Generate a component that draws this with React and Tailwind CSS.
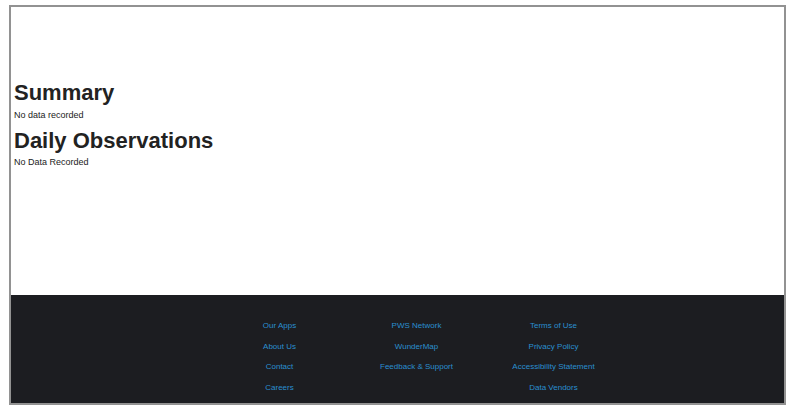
import React from 'react';

const columns = [
  ['Our Apps', 'About Us', 'Contact', 'Careers'],
  ['PWS Network', 'WunderMap', 'Feedback & Support'],
  ['Terms of Use', 'Privacy Policy', 'Accessibility Statement', 'Data Vendors'],
];

const App = () => {
  return (
    <div className="w-[792px] h-[412px] bg-white font-['Liberation_Sans',Arial,sans-serif] text-[#222]">
      <div className="ml-[9px] pt-[5px]">
        <div className="w-[777px] h-[400px] border-2 border-[#929292] flex flex-col">
          {/* Content */}
          <div className="flex-1 pt-[73px] pl-[3px]">
            <h2 className="text-[22px] font-bold leading-[25px]">Summary</h2>
            <p className="text-[9px] leading-[10px] mt-[5px]">No data recorded</p>
            <h2 className="text-[22px] font-bold leading-[25px] mt-[8px]">Daily Observations</h2>
            <p className="text-[9px] leading-[10px] mt-[4px]">No Data Recorded</p>
          </div>

          {/* Footer */}
          <div className="h-[108px] bg-[#1c1d21] pt-[21px] pl-[200px]">
            <div className="grid grid-cols-[137px_137px_137px]">
              {columns.map((col, i) => (
                <div key={i} className="flex flex-col items-center">
                  {col.map(link => (
                    <a key={link} className="text-[8px] leading-[20.7px] text-[#2a8fd0]">
                      {link}
                    </a>
                  ))}
                </div>
              ))}
            </div>
          </div>
        </div>
      </div>
    </div>
  );
};

export default App;
